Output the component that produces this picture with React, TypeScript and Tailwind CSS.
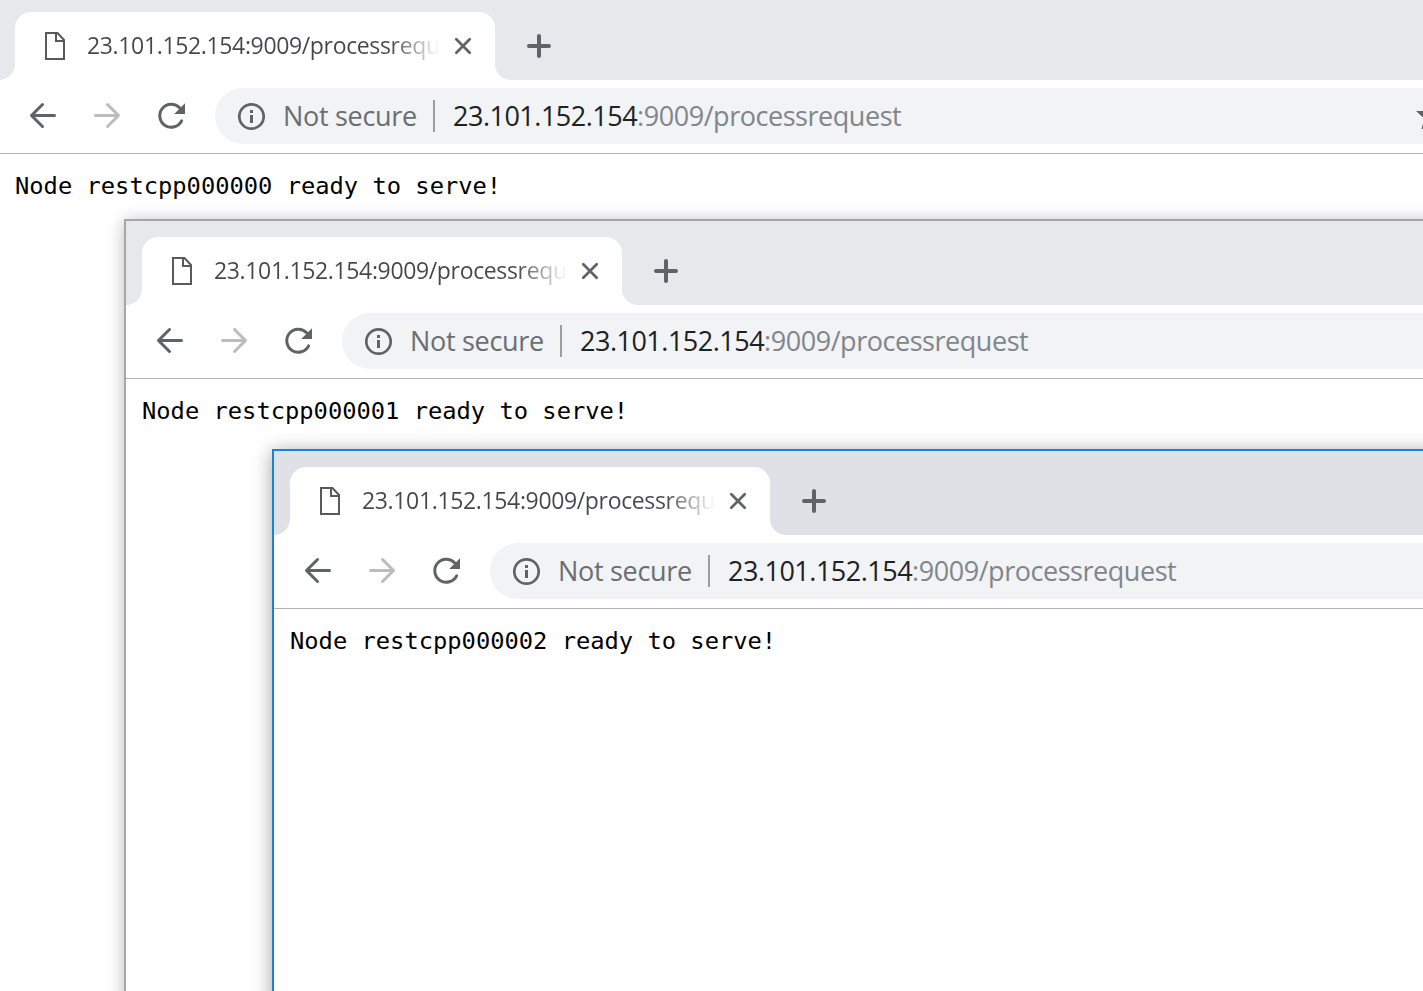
import React from "react";

const ADDRESS_HOST = "23.101.152.154";
const ADDRESS_PATH = ":9009/processrequest";

function DocumentIcon() {
  return (
    <svg width="22" height="30" viewBox="0 0 22 30" fill="none" stroke="#5a5a5a" strokeWidth="2" className="shrink-0">
      <path d="M13.5 2H2v26h18V9L13.5 2Z" />
      <path d="M12 2v8h8" />
    </svg>
  );
}

function CloseIcon() {
  return (
    <svg width="18" height="18" viewBox="0 0 18 18" stroke="#5f6368" strokeWidth="2.7" strokeLinecap="round" className="shrink-0">
      <path d="M2.3 2.3 15.7 15.7M15.7 2.3 2.3 15.7" />
    </svg>
  );
}

function PlusIcon() {
  return (
    <svg width="24" height="24" viewBox="0 0 24 24" stroke="#5f6368" strokeWidth="4" strokeLinecap="round" className="shrink-0">
      <path d="M12 2v20M2 12h20" />
    </svg>
  );
}

function BackIcon() {
  return (
    <svg width="28" height="28" viewBox="0 0 28 28" fill="none" stroke="#5f6368" strokeWidth="3" strokeLinecap="round" strokeLinejoin="round" className="shrink-0">
      <path d="M25.5 13.5H3M13.5 2.5 2.5 13.5l11 11" />
    </svg>
  );
}

function ForwardIcon() {
  return (
    <svg width="28" height="28" viewBox="0 0 28 28" fill="none" stroke="#babcbe" strokeWidth="3" strokeLinecap="round" strokeLinejoin="round" className="shrink-0">
      <path d="M2.5 13.5H25M14.5 2.5l11 11-11 11" />
    </svg>
  );
}

function ReloadIcon() {
  return (
    <svg width="30" height="28" viewBox="0 0 30 28" fill="none" className="shrink-0">
      <path d="M22.6 5.8A11.5 11.5 0 1 0 24.6 18.8" stroke="#5f6368" strokeWidth="3" strokeLinecap="round" />
      <path d="M28 1.2V12H17.2Z" fill="#5f6368" />
    </svg>
  );
}

function InfoIcon() {
  return (
    <svg width="30" height="30" viewBox="0 0 30 30" fill="none" className="shrink-0">
      <circle cx="15.5" cy="15.5" r="12.2" stroke="#5f6368" strokeWidth="2.7" />
      <path d="M14 9h3v3h-3zM14 14h3v8h-3z" fill="#5f6368" />
    </svg>
  );
}

type WindowProps = {
  frame: string;
  strip: string;
  message: string;
  star?: boolean;
};

function BrowserWindow({ frame, strip, message, star }: WindowProps) {
  return (
    <section className={`absolute bg-white ${frame}`}>
      <div className="flex h-full flex-col overflow-hidden">
        <div className={`flex h-[84px] shrink-0 ${strip}`}>
          <div className="flex w-4 items-end bg-white">
            <div className={`h-full w-4 rounded-br-2xl ${strip}`} />
          </div>
          <div className={`${strip} pt-4`}>
            <div className="flex h-[68px] w-[480px] items-center rounded-t-2xl bg-white pl-[29px]">
              <DocumentIcon />
              <span className="mb-0.5 ml-[21px] w-[360px] bg-linear-to-r from-[#45474a] from-84% to-transparent to-98% bg-clip-text font-['Open_Sans',sans-serif] text-[23px] leading-8 tracking-[-0.35px] whitespace-nowrap text-transparent">
                {ADDRESS_HOST}:9009/processrequ
              </span>
              <span className="ml-[7px] flex">
                <CloseIcon />
              </span>
            </div>
          </div>
          <div className="flex flex-1 bg-white">
            <div className={`flex flex-1 rounded-bl-2xl pt-[38px] pl-8 ${strip}`}>
              <PlusIcon />
            </div>
          </div>
        </div>

        <div className="flex h-[74px] shrink-0 items-start border-b border-[#b3b4b6] pt-2 pl-[30px]">
          <div className="flex h-14 items-center gap-9">
            <BackIcon />
            <ForwardIcon />
            <ReloadIcon />
          </div>
          <div className="ml-7 flex h-14 flex-1 items-center rounded-l-full bg-[#f1f3f4] pl-[21px] font-['Open_Sans',sans-serif] text-[27px] whitespace-nowrap">
            <InfoIcon />
            <span className="ml-[17px] w-[134px] pt-px tracking-[-0.3px] text-[#6a6e73]">Not secure</span>
            <span className="ml-4 h-8 w-0.5 bg-[#9b9da0]" />
            <span className="ml-[18px] pt-px tracking-[-0.5px] text-[#202124]">{ADDRESS_HOST}</span>
            <span className="pt-px tracking-[-0.46px] text-[#80868b]">{ADDRESS_PATH}</span>
            {star && (
              <svg width="7" height="28" viewBox="0 0 7 28" className="ml-auto" fill="#5f6368">
                <path d="M0 9h7v6.5ZM7 21.5 5.5 27H7Z" />
              </svg>
            )}
          </div>
        </div>

        <pre className="pt-4 pl-4 font-['DejaVu_Sans_Mono',monospace] text-[23.75px] leading-8 text-black">{message}</pre>
      </div>
    </section>
  );
}

export default function App() {
  return (
    <main className="relative h-[991px] w-full overflow-hidden bg-white">
      <BrowserWindow frame="-top-1 right-0 bottom-0 -left-px" strip="bg-[#e6e9ec]" message="Node restcpp000000 ready to serve!" star />
      <BrowserWindow
        frame="top-[219px] -right-8 -bottom-8 left-[124px] border-t-2 border-l-2 border-[#a7a7a7] shadow-[0_2px_16px_rgba(0,0,0,0.27)]"
        strip="bg-[#e6e9ec]"
        message="Node restcpp000001 ready to serve!"
      />
      <BrowserWindow
        frame="top-[449px] -right-8 -bottom-8 left-[272px] border-t-2 border-l-2 border-[#1b81d3] shadow-[0_3px_18px_rgba(0,0,0,0.38)]"
        strip="bg-[#dee1e6]"
        message="Node restcpp000002 ready to serve!"
      />
    </main>
  );
}
